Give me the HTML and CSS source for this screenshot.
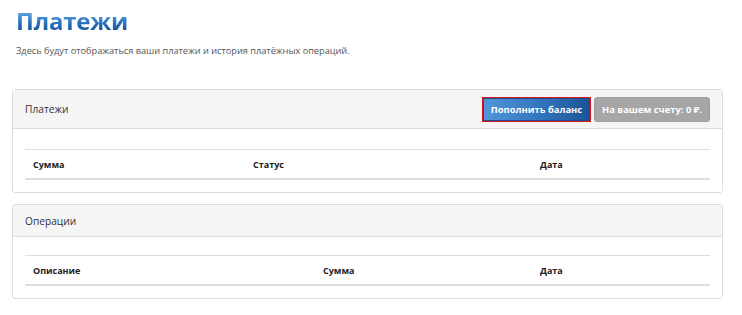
FILE: index.html
```html
<!DOCTYPE html>
<html lang="ru">

<head>
    <meta charset="UTF-8">
    <meta name="viewport" content="width=device-width, initial-scale=1.0">
    <title>Платежи</title>
    <link rel="stylesheet" href="styles.css">
</head>

<body>

    <div class="page">
        <h1 class="page-title">Платежи</h1>
        <p class="page-lead">Здесь будут отображаться ваши платежи и история платёжных операций.</p>

        <!-- Платежи -->
        <div class="panel">
            <div class="panel-heading panel-heading-tall">
                <span class="panel-title">Платежи</span>
                <div class="panel-actions">
                    <button class="btn btn-primary">Пополнить баланс</button>
                    <button class="btn btn-muted">На вашем счету: 0 ₽.</button>
                </div>
            </div>
            <div class="panel-body">
                <table class="table">
                    <thead>
                        <tr>
                            <th class="col-a">Сумма</th>
                            <th class="col-b">Статус</th>
                            <th>Дата</th>
                        </tr>
                    </thead>
                </table>
            </div>
        </div>

        <!-- Операции -->
        <div class="panel">
            <div class="panel-heading">
                <span class="panel-title">Операции</span>
            </div>
            <div class="panel-body panel-body-short">
                <table class="table">
                    <thead>
                        <tr>
                            <th class="col-c">Описание</th>
                            <th class="col-d">Сумма</th>
                            <th>Дата</th>
                        </tr>
                    </thead>
                </table>
            </div>
        </div>
    </div>

</body>

</html>
```

FILE: styles.css
```css
body {
    margin: 0;
    font-family: "Open Sans", "Noto Sans", sans-serif;
    color: #333;
    background: #fff;
}

.page {
    padding: 0 19px 0 12px;
}

.page-title {
    margin: 0;
    padding: 3px 0 0 4px;
    font-size: 24px;
    line-height: 36px;
    font-weight: 700;
    letter-spacing: -0.2px;
    background: linear-gradient(to bottom, #6fafe8 25%, #2e78c6 55%, #1c5a9e 75%);
    -webkit-background-clip: text;
    background-clip: text;
    color: transparent;
    display: inline-block;
}

.page-lead {
    margin: 5px 0 0 4px;
    font-size: 9.2px;
    line-height: 14px;
    color: #555;
}

.panel {
    border: 1px solid #ddd;
    border-radius: 3px;
    margin-top: 31px;
}

.panel + .panel {
    margin-top: 11px;
}

.panel-heading {
    display: flex;
    align-items: center;
    justify-content: space-between;
    height: 31px;
    padding: 0 12px;
    background: #f5f5f5;
    border-bottom: 1px solid #ddd;
}

.panel-heading-tall {
    height: 38px;
}

.panel-title {
    font-size: 10.2px;
    color: #333;
}

.panel-actions {
    display: flex;
    gap: 3px;
}

.btn {
    font-family: inherit;
    font-size: 9.4px;
    font-weight: 700;
    color: #fff;
    height: 25px;
    border-radius: 3px;
    border: 1px solid transparent;
    padding: 0;
}

.btn-primary {
    width: 107px;
    height: 23px;
    margin: 1px;
    background: linear-gradient(to right, #5096da, #3274bb 55%, #1c5496);
    border-color: #1e4f8a;
    border-radius: 0;
    outline: 1.5px solid #d8121e;
}

.btn-muted {
    width: 116px;
    background: #a6a6a6;
    border-color: #9e9e9e;
}

.panel-body {
    padding: 20px 12px 12px;
}

.panel-body-short {
    padding-top: 18px;
}

.table {
    width: 100%;
    border-collapse: collapse;
}

.table th {
    text-align: left;
    font-size: 9px;
    font-weight: 700;
    color: #222;
    height: 28px;
    padding: 0 8px;
    border-top: 1px solid #ddd;
    border-bottom: 2px solid #ddd;
}

.col-a {
    width: 204px;
}

.col-b {
    width: 271px;
}

.col-c {
    width: 274px;
}

.col-d {
    width: 201px;
}
```
